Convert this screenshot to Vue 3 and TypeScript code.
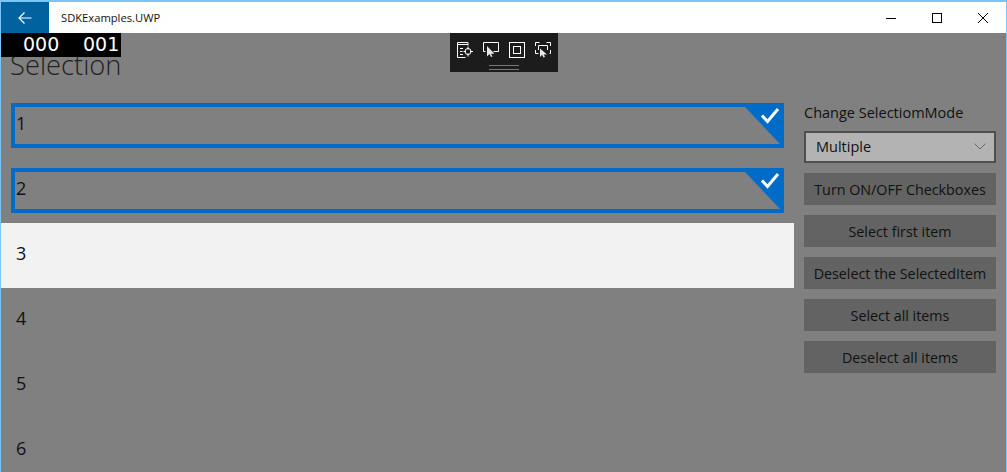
<script setup lang="ts">
const rows = [
  { n: 1, selected: true },
  { n: 2, selected: true },
  { n: 3, hover: true },
  { n: 4 },
  { n: 5 },
  { n: 6 },
];
const actions = [
  "Turn ON/OFF Checkboxes",
  "Select first item",
  "Deselect the SelectedItem",
  "Select all items",
  "Deselect all items",
];
</script>

<template>
  <div class="window">
    <header class="titlebar">
      <button class="back">
        <svg width="14" height="12" viewBox="0 0 14 12">
          <path d="M6.500 .5 1 6l5.500 5.500M1 6h12.500" fill="none" stroke="#fff" stroke-width="1.200" />
        </svg>
      </button>
      <span class="app-name">SDKExamples.UWP</span>
      <div class="caption">
        <span class="cap"><svg width="10" height="10" viewBox="0 0 10 10"><path d="M0 5.500h10" stroke="#000" /></svg></span>
        <span class="cap"><svg width="10" height="10" viewBox="0 0 10 10"><rect x=".5" y=".5" width="9" height="9" fill="none" stroke="#000" /></svg></span>
        <span class="cap"><svg width="10" height="10" viewBox="0 0 10 10"><path d="M0 0l10 10M10 0 0 10" stroke="#000" /></svg></span>
      </div>
    </header>

    <main class="content">
      <div class="counter"><span>000</span><span>001</span></div>
      <div class="devtools">
        <div class="tool-row">
          <svg width="16" height="16" viewBox="0 0 16 16" fill="none" stroke="#fff">
            <path d="M.5 15.500V.5h10.500v3M.5 2.500h10.500M.5 15.500h8" />
            <path d="M3 6.500h3M3 9.500h2.500M3 12.500h3" />
            <circle cx="11" cy="9.500" r="3" />
            <path d="M11 4.500v3M11 11.500v3M6.500 9.500h2.500M13 9.500h3" />
          </svg>
          <svg width="16" height="16" viewBox="0 0 16 16" fill="none" stroke="#fff">
            <path d="M2.500 9.500h-2V.5h15v9h-5" />
            <path d="M4 4v10.500l2.500-2.500 1.500 3 1.500-.5-1.500-2.800h3.500z" fill="#e8e8e8" stroke="none" />
          </svg>
          <svg width="16" height="16" viewBox="0 0 16 16" fill="none" stroke="#fff">
            <rect x=".5" y=".5" width="15" height="15" />
            <rect x="4.500" y="4.500" width="7" height="7" />
          </svg>
          <svg width="16" height="16" viewBox="0 0 16 16" fill="none" stroke="#fff">
            <path d="M.5 4V.5h4M11.500 .5h4V4M.5 8v3.500h3M15.500 8v3.500h-1" />
            <path d="M3.500 8V3.500h9V8" />
            <path d="M5 6.500V15l2.200-2.200 1.200 2.800 1.600-.6-1.200-2.500h3.200z" fill="#e8e8e8" stroke="none" />
          </svg>
        </div>
        <div class="grip"></div>
      </div>

      <section class="left">
        <h1 class="heading">Selection</h1>
        <ul class="list">
          <li v-for="r in rows" :key="r.n" class="row" :class="{ selected: r.selected, hover: r.hover }">
            <div class="cell">
              <span class="num">{{ r.n }}</span>
              <template v-if="r.selected">
                <span class="corner"></span>
                <svg class="tick" width="20" height="18" viewBox="0 0 20 18">
                  <path d="M2 8.500l5.500 6L18 2" fill="none" stroke="#fff" stroke-width="3" />
                </svg>
              </template>
            </div>
          </li>
        </ul>
      </section>

      <aside class="side">
        <label class="side-label">Change SelectiomMode</label>
        <div class="combo">
          <span>Multiple</span>
          <svg width="12" height="7" viewBox="0 0 12 7"><path d="M.5 .5 6 6 11.500 .5" fill="none" stroke="#6a6a6a" /></svg>
        </div>
        <button v-for="a in actions" :key="a" class="action">{{ a }}</button>
      </aside>
    </main>
  </div>
</template>

<style>
html,
body {
  margin: 0;
  overflow: hidden;
}
</style>

<style scoped>
.window {
  box-sizing: border-box;
  width: 1007px;
  height: 472px;
  border: 1px solid #7cc4f5;
  border-top-width: 2px;
  border-bottom: 0;
  display: flex;
  flex-direction: column;
  overflow: hidden;
  font-family: "Open Sans", "Noto Sans", sans-serif;
  color: #111;
}
.titlebar {
  height: 31px;
  flex: none;
  display: flex;
  align-items: center;
  background: #fff;
}
.back {
  width: 48px;
  height: 31px;
  border: 0;
  padding: 0;
  background: #00639f;
  display: flex;
  align-items: center;
  justify-content: center;
}
.app-name {
  margin-left: 12px;
  font-size: 11.200px;
  color: #111;
}
.caption {
  margin-left: auto;
  display: flex;
}
.cap {
  width: 46px;
  height: 31px;
  display: flex;
  align-items: center;
  justify-content: center;
}
.content {
  position: relative;
  flex: 1;
  display: flex;
  background: #808080;
  overflow: hidden;
}
.counter {
  position: absolute;
  left: 0;
  top: 0;
  width: 120px;
  height: 24px;
  background: #000;
  color: #fff;
  font-family: "DejaVu Sans", sans-serif;
  font-size: 19px;
  line-height: 22px;
  z-index: 2;
}
.counter span {
  position: absolute;
  top: 0;
}
.counter span:first-child {
  left: 22px;
}
.counter span:last-child {
  left: 82px;
}
.devtools {
  position: absolute;
  left: 449px;
  top: 0;
  width: 108px;
  height: 39px;
  background: #1c1c1c;
  z-index: 2;
}
.tool-row {
  display: flex;
  align-items: center;
  gap: 10px;
  padding: 9px 0 0 7px;
}
.tool-row svg {
  display: block;
}
.grip {
  width: 30px;
  height: 3px;
  margin: 7px auto 0;
  border-top: 1px solid #777;
  border-bottom: 1px solid #777;
}
.left {
  width: 793px;
  flex: none;
}
.heading {
  margin: 0;
  padding: 14px 0 0 9px;
  height: 45px;
  box-sizing: border-box;
  font-size: 27.300px;
  line-height: 36px;
  font-weight: 300;
  color: #222;
}
.list {
  list-style: none;
  margin: 15px 0 0;
  padding: 0;
}
.row {
  height: 65px;
  padding: 10px;
  box-sizing: border-box;
}
.row.hover {
  background: #f2f2f2;
}
.cell {
  position: relative;
  box-sizing: border-box;
  height: 45px;
  padding: 0 0 6px 1px;
  display: flex;
  align-items: center;
  border: 4px solid transparent;
  font-size: 18px;
}
.row.selected .cell {
  border-color: #006cc8;
}
.num {
  color: #111;
}
.corner {
  position: absolute;
  top: 0;
  right: 0;
  width: 0;
  height: 0;
  border-top: 37px solid #006cc8;
  border-left: 35px solid transparent;
}
.tick {
  position: absolute;
  top: 0;
  right: 0;
}
.side {
  flex: none;
  width: 192px;
  margin-left: 10px;
  padding-top: 70px;
  display: flex;
  flex-direction: column;
}
.side-label {
  font-size: 14.500px;
  line-height: 20px;
  color: #111;
}
.combo {
  box-sizing: border-box;
  height: 32px;
  margin-top: 8px;
  padding: 0 8px 2px 10px;
  border: 2px solid #4f4f4f;
  background: #b3b3b3;
  display: flex;
  align-items: center;
  justify-content: space-between;
  font-size: 14.500px;
}
.action {
  box-sizing: border-box;
  height: 32px;
  margin-top: 10px;
  border: 0;
  padding: 0;
  background: #636363;
  color: #111;
  font-family: inherit;
  font-size: 14.300px;
}
</style>
